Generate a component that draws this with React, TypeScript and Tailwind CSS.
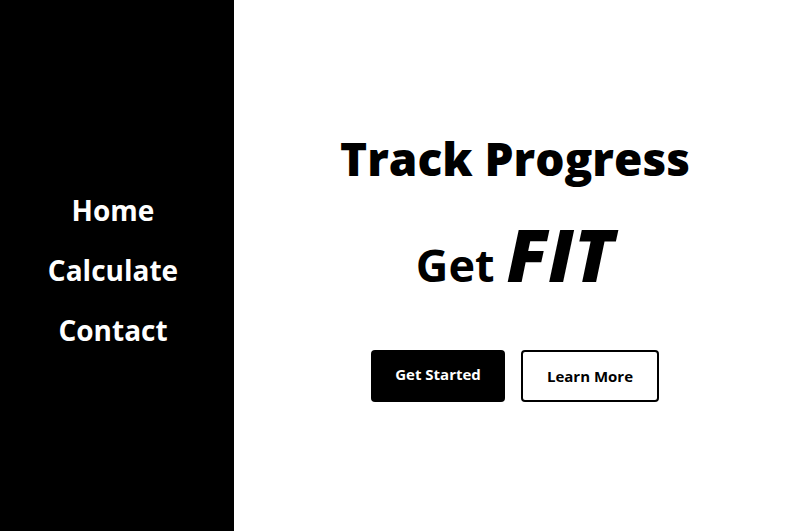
import React from 'react'

const NAV = ['Home', 'Calculate', 'Contact']

export default function App() {
  return (
    <div className="flex h-[531px] w-full font-['Open_Sans',sans-serif] bg-white">
      {/* Sidebar */}
      <nav className="w-[234px] shrink-0 bg-black flex flex-col items-center justify-center gap-[18px] pt-[8px] pr-[8px]">
        {NAV.map(item => (
          <a key={item} className="text-white text-[28px] font-bold leading-[42px]">
            {item}
          </a>
        ))}
      </nav>

      {/* Main */}
      <main className="flex-1 flex flex-col items-center justify-center pl-[9px] pt-[6px]">
        <h1 className="text-[46px] font-extrabold leading-none text-black">Track Progress</h1>
        <h2 className="mt-[36px] flex items-baseline gap-3 text-black">
          <span className="text-[45px] font-bold">Get</span>
          <span className="text-[73px] font-extrabold italic leading-none">FIT</span>
        </h2>
        <div className="mt-[52px] flex gap-4">
          <button className="w-[134px] h-[52px] rounded bg-black text-white text-[15px] font-bold pb-1">
            Get Started
          </button>
          <button className="w-[138px] h-[52px] rounded border-2 border-black bg-white text-black text-[15px] font-bold">
            Learn More
          </button>
        </div>
      </main>
    </div>
  )
}
